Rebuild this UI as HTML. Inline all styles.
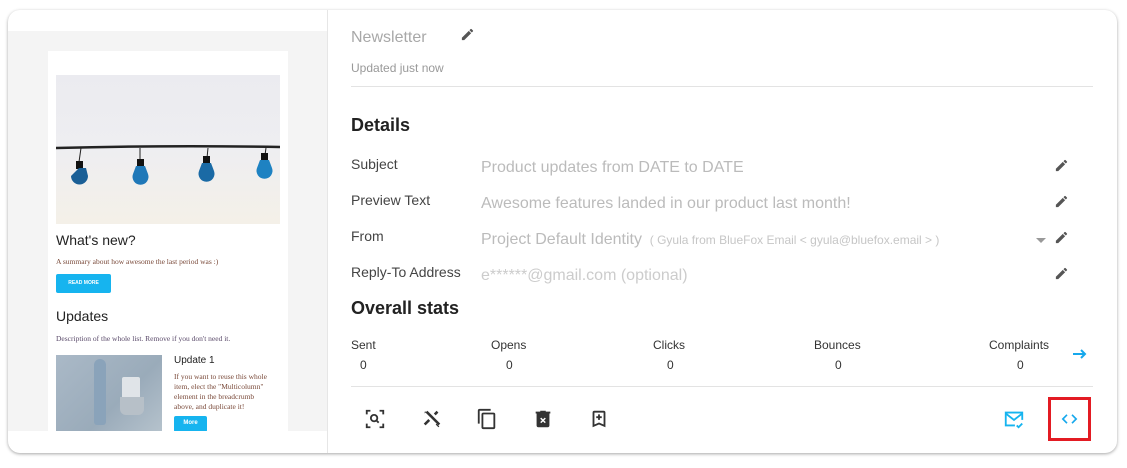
<!DOCTYPE html>
<html><head><meta charset="utf-8"><style>
*{margin:0;padding:0;box-sizing:border-box}
body{width:1127px;height:468px;background:#fff;font-family:"Liberation Sans",Roboto,sans-serif;position:relative;overflow:hidden}
.card{position:absolute;left:8px;top:10px;width:1109px;height:443px;border-radius:12px;background:#fff;box-shadow:0 1px 3px rgba(0,0,0,.35);overflow:hidden}
.a{position:absolute;white-space:nowrap}
.lbl{font-size:14px;color:#444}
.val{font-size:16px;color:#bbb}
.pen{position:absolute;width:15px;height:15px}
.ser{font-family:"Liberation Serif",serif}
</style></head><body>
<div class="card">
 <div class="a" style="left:0;top:21px;width:319px;height:400px;background:#f4f4f4"></div>
 <div class="a" style="left:319px;top:0;width:1px;height:443px;background:#e6e6e6"></div>
 <div class="a" style="left:40px;top:41px;width:240px;height:380px;background:#fff;overflow:hidden">
  <div class="a" style="left:8px;top:24px;width:224px;height:149px;background:linear-gradient(180deg,#ebebf0 0%,#eeeef1 50%,#f4f0e8 100%)">
   <svg width="224" height="149" style="position:absolute;left:0;top:0">
    <path d="M0 73 Q112 70 224 72" stroke="#222" stroke-width="2.5" fill="none"/>
    <line x1="25" y1="73" x2="23" y2="87" stroke="#222" stroke-width="1"/>
    <line x1="84" y1="73" x2="84" y2="86" stroke="#222" stroke-width="1"/>
    <line x1="152" y1="73" x2="151" y2="83" stroke="#222" stroke-width="1"/>
    <line x1="210" y1="73" x2="209" y2="80" stroke="#222" stroke-width="1"/>
    <rect x="20" y="86" width="7" height="8" fill="#111"/><path d="M20 93 L27 93 L29 101 A8 8 0 1 1 12 101 Z" fill="#1a5f96" transform="translate(3 0)"/>
    <rect x="81" y="84" width="7" height="8" fill="#111"/><path d="M80 91 L89 91 L92 99 A8 8 0 1 1 77 99 Z" fill="#1f78b8"/>
    <rect x="147" y="81" width="7" height="8" fill="#111"/><path d="M146 88 L155 88 L158 96 A8 8 0 1 1 143 96 Z" fill="#1a6aa5"/>
    <rect x="205" y="78" width="7" height="8" fill="#111"/><path d="M204 85 L213 85 L216 93 A8 8 0 1 1 201 93 Z" fill="#1e82c2"/>
   </svg>
  </div>
  <div class="a" style="left:8px;top:181px;font-size:14px;color:#222">What's new?</div>
  <div class="a ser" style="left:8px;top:206px;font-size:7.5px;color:#7a4a3a">A summary about how awesome the last period was :)</div>
  <div class="a" style="left:8px;top:223px;width:55px;height:19px;background:#16b4ef;border-radius:2px;color:#fff;font-size:5px;font-weight:bold;text-align:center;line-height:19px">READ MORE</div>
  <div class="a" style="left:8px;top:257px;font-size:14px;color:#222">Updates</div>
  <div class="a ser" style="left:8px;top:283px;font-size:7.5px;color:#5a4a6a">Description of the whole list. Remove if you don't need it.</div>
  <div class="a" style="left:8px;top:304px;width:106px;height:76px;background:linear-gradient(135deg,#aab9c7,#9aabba 60%,#b5c2cc)">
   <div class="a" style="left:38px;top:4px;width:12px;height:66px;background:#8aa3ba;border-radius:6px 6px 3px 3px"></div>
   <div class="a" style="left:66px;top:22px;width:18px;height:22px;background:#e0e4e8;border-radius:2px"></div>
   <div class="a" style="left:64px;top:42px;width:24px;height:18px;background:#b7c0c8;border-radius:0 0 6px 6px"></div>
  </div>
  <div class="a" style="left:126px;top:304px;font-size:10px;color:#222">Update 1</div>
  <div class="a ser" style="left:126px;top:321px;font-size:7.5px;line-height:10px;color:#7a4a3a;white-space:normal;width:100px">If you want to reuse this whole item, elect the "Multicolumn" element in the breadcrumb above, and duplicate it!</div>
  <div class="a" style="left:126px;top:365px;width:33px;height:16px;background:#16b4ef;border-radius:2px;color:#fff;font-size:6px;font-weight:bold;text-align:center;line-height:14px">More</div>
 </div>

 <div class="a" style="left:343px;top:19px;font-size:16px;color:#a8a8a8">Newsletter</div>
 <svg class="pen" style="left:452px;top:17px" viewBox="0 0 24 24"><path fill="#555" d="M3 17.25V21h3.75L17.81 9.94l-3.75-3.75L3 17.25zM20.71 7.04a1 1 0 000-1.41l-2.34-2.34a1 1 0 00-1.41 0l-1.83 1.83 3.75 3.75 1.83-1.83z"/></svg>
 <div class="a" style="left:343px;top:51px;font-size:12px;color:#999">Updated just now</div>
 <div class="a" style="left:343px;top:76px;width:742px;height:1px;background:#e3e3e3"></div>
 <div class="a" style="left:343px;top:105px;font-size:18px;font-weight:bold;color:#222">Details</div>

 <div class="a lbl" style="left:343px;top:146px">Subject</div>
 <div class="a val" style="left:473px;top:149px">Product updates from DATE to DATE</div>
 <div class="a lbl" style="left:343px;top:182px">Preview Text</div>
 <div class="a val" style="left:473px;top:185px">Awesome features landed in our product last month!</div>
 <div class="a lbl" style="left:343px;top:218px">From</div>
 <div class="a val" style="left:473px;top:221px">Project Default Identity <span style="font-size:12px;color:#c6c6c6">&nbsp;( Gyula from BlueFox Email &lt; gyula@bluefox.email &gt; )</span></div>
 <div class="a" style="left:1028px;top:228px;width:0;height:0;border-left:5px solid transparent;border-right:5px solid transparent;border-top:5px solid #999"></div>
 <div class="a lbl" style="left:343px;top:254px">Reply-To Address</div>
 <div class="a val" style="left:473px;top:257px;color:#ccc">e******@gmail.com (optional)</div>
 <svg class="pen" style="left:1046px;top:148px" viewBox="0 0 24 24"><path fill="#555" d="M3 17.25V21h3.75L17.81 9.94l-3.75-3.75L3 17.25zM20.71 7.04a1 1 0 000-1.41l-2.34-2.34a1 1 0 00-1.41 0l-1.83 1.83 3.75 3.75 1.83-1.83z"/></svg>
 <svg class="pen" style="left:1046px;top:184px" viewBox="0 0 24 24"><path fill="#555" d="M3 17.25V21h3.75L17.81 9.94l-3.75-3.75L3 17.25zM20.71 7.04a1 1 0 000-1.41l-2.34-2.34a1 1 0 00-1.41 0l-1.83 1.83 3.75 3.75 1.83-1.83z"/></svg>
 <svg class="pen" style="left:1046px;top:220px" viewBox="0 0 24 24"><path fill="#555" d="M3 17.25V21h3.75L17.81 9.94l-3.75-3.75L3 17.25zM20.71 7.04a1 1 0 000-1.41l-2.34-2.34a1 1 0 00-1.41 0l-1.83 1.83 3.75 3.75 1.83-1.83z"/></svg>
 <svg class="pen" style="left:1046px;top:256px" viewBox="0 0 24 24"><path fill="#555" d="M3 17.25V21h3.75L17.81 9.94l-3.75-3.75L3 17.25zM20.71 7.04a1 1 0 000-1.41l-2.34-2.34a1 1 0 00-1.41 0l-1.83 1.83 3.75 3.75 1.83-1.83z"/></svg>

 <div class="a" style="left:343px;top:288px;font-size:18px;font-weight:bold;color:#222">Overall stats</div>
 <div class="a" style="left:343px;top:328px;font-size:12px;color:#333">Sent</div>
 <div class="a" style="left:352px;top:348px;font-size:12px;color:#333">0</div>
 <div class="a" style="left:483px;top:328px;font-size:12px;color:#333">Opens</div>
 <div class="a" style="left:498px;top:348px;font-size:12px;color:#333">0</div>
 <div class="a" style="left:645px;top:328px;font-size:12px;color:#333">Clicks</div>
 <div class="a" style="left:659px;top:348px;font-size:12px;color:#333">0</div>
 <div class="a" style="left:806px;top:328px;font-size:12px;color:#333">Bounces</div>
 <div class="a" style="left:827px;top:348px;font-size:12px;color:#333">0</div>
 <div class="a" style="left:981px;top:328px;font-size:12px;color:#333">Complaints</div>
 <div class="a" style="left:1009px;top:348px;font-size:12px;color:#333">0</div>
 <svg class="a" style="left:1064px;top:338px" width="16" height="12" viewBox="0 0 16 12"><path d="M1 6h12M9 2l4 4-4 4" stroke="#16a8ec" stroke-width="2" fill="none"/></svg>
 <div class="a" style="left:343px;top:376px;width:742px;height:1px;background:#e3e3e3"></div>

 <svg class="a" style="left:356px;top:398px" width="22" height="22" viewBox="0 0 24 24" fill="none" stroke="#333" stroke-width="2"><path d="M3 7V3h4M17 3h4v4M21 17v4h-4M7 21H3v-4"/><circle cx="11" cy="11" r="3.5"/><path d="M13.5 13.5L16 16"/></svg>
 <svg class="a" style="left:413px;top:398px" width="22" height="22" viewBox="0 0 24 24" fill="#333"><path d="M5 5l2-2 14 14-2 2z"/><path d="M19 5l-3 3 0 0-2-2 3-3zM10 14l-5 5-2-2 5-5z"/><path d="M17 17l3 3-1 1-3-3zM4 4l2 0-2 2z"/></svg>
 <svg class="a" style="left:468px;top:398px" width="22" height="22" viewBox="0 0 24 24" fill="#333"><path d="M16 1H4a2 2 0 00-2 2v14h2V3h12V1zm3 4H8a2 2 0 00-2 2v14a2 2 0 002 2h11a2 2 0 002-2V7a2 2 0 00-2-2zm0 16H8V7h11v14z"/></svg>
 <svg class="a" style="left:524px;top:398px" width="22" height="22" viewBox="0 0 24 24" fill="#333"><path d="M15 4V3H9v1H4v2h1v13a2 2 0 002 2h10a2 2 0 002-2V6h1V4h-5z"/><path d="M9.5 11l5 5M14.5 11l-5 5" stroke="#fff" stroke-width="1.6"/></svg>
 <svg class="a" style="left:580px;top:398px" width="22" height="22" viewBox="0 0 24 24" fill="#333"><path d="M17 3H7a2 2 0 00-2 2v16l7-3 7 3V5a2 2 0 00-2-2zm0 15l-5-2.2L7 18V5h10v13zM13 7h-2v2H9v2h2v2h2v-2h2V9h-2z"/></svg>
 <svg class="a" style="left:995px;top:398px" width="22" height="22" viewBox="0 0 24 24" fill="none" stroke="#16b4ef" stroke-width="2"><path d="M13 19H3V5h18v8"/><path d="M3 6l9 7 9-7"/><path d="M15 19l2 2 4-4"/></svg>
 <div class="a" style="left:1040px;top:387px;width:43px;height:44px;border:3px solid #e31b23"></div>
 <svg class="a" style="left:1051px;top:399px" width="21" height="20" viewBox="0 0 24 24" fill="none" stroke="#16a8ec" stroke-width="2"><path d="M9 7l-5 5 5 5M15 7l5 5-5 5"/></svg>
</div>
</body></html>
